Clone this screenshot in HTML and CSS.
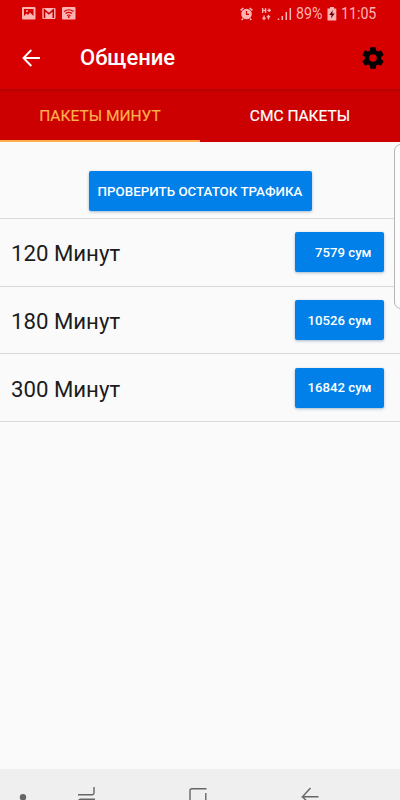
FILE: index.html
```html
<!DOCTYPE html>
<html lang="ru">
<head>
    <meta charset="UTF-8">
    <meta name="viewport" content="width=device-width, initial-scale=1.0">
    <title>Общение</title>
    <link rel="stylesheet" href="styles.css">
</head>
<body>
    <div class="screen">
        <header class="header">
            <div class="status-bar">
                <svg class="status-left" width="54" height="13" viewBox="0 0 54 13">
                    <rect width="13.5" height="12.5" rx="1" fill="#ffb3b3"/>
                    <path d="M2 2h9.500v7L8 5.500 6 8 4.500 6.500 2 9z" fill="#d60000"/>
                    <circle cx="5" cy="4" r="1" fill="#ffb3b3"/>
                    <rect x="20.300" y="1" width="13.200" height="11" rx="1" fill="#ffb3b3"/>
                    <path d="M22.500 11V3l4.400 3.800L31.300 3v8" fill="none" stroke="#c00000" stroke-width="1.600"/>
                    <rect x="40" width="13.500" height="12.500" rx="1" fill="#ffb3b3"/>
                    <path d="M42 4.500q4.800-3.500 9.600 0M43.500 6.600q3.300-2.400 6.600 0M45 8.600q1.800-1.200 3.600 0" fill="none" stroke="#d60000" stroke-width="1.200"/>
                    <circle cx="46.800" cy="10" r="1" fill="#d60000"/>
                </svg>
                <svg class="status-right" width="52" height="14" viewBox="0 0 52 14">
                    <circle cx="6.500" cy="7" r="5.300" fill="#ffb3b3"/>
                    <path d="M.6 3.400 3.400 1M12.400 3.400 9.600 1M3 11.500l-1.300 1.500M10 11.500l1.300 1.500" stroke="#ffb3b3" stroke-width="1.600"/>
                    <path d="M6.500 4v3.400H9" fill="none" stroke="#d60000" stroke-width="1.200"/>
                    <path d="M22.600 1v5M25.600 1v5M22.600 3.500h3M27.300 3.300H31M29.200 1.500v3.600M24 8.500v3.800M22.500 10.800 24 12.300l1.500-1.500M28.500 12.500V8.700M27 10.200l1.500-1.500 1.500 1.500" fill="none" stroke="#ffb3b3" stroke-width="1.300"/>
                    <path d="M38.500 11.500v1.500M42.300 9v4M46.300 5v8M50.300 1v12" stroke="#ffb3b3" stroke-width="1.500"/>
                </svg>
                <span class="percent">89%</span>
                <svg class="battery" width="10" height="14" viewBox="0 0 10 14">
                    <path d="M3 0h4v1.500h2.300v12H.5v-12H3z" fill="#ffb3b3"/>
                    <path d="M5.800 3 2.300 8h2.300L4 11.500 7.700 6.600H5.300z" fill="#5a0000"/>
                </svg>
                <span class="clock">11:05</span>
            </div>
            <div class="toolbar">
                <svg class="back" width="18" height="18" viewBox="0 0 18 18">
                    <path d="M9.300 1 1.500 9l7.800 8M1.500 9H18" fill="none" stroke="#fff" stroke-width="1.900"/>
                </svg>
                <h1>Общение</h1>
                <svg class="settings" width="26" height="26" viewBox="0 0 24 24">
                    <path d="M19.430 12.980c.04-.32.07-.64.07-.98s-.03-.66-.07-.98l2.110-1.650c.19-.15.24-.42.12-.64l-2-3.460c-.12-.22-.39-.3-.61-.22l-2.490 1c-.52-.4-1.080-.73-1.690-.98l-.38-2.650C14.460 2.180 14.250 2 14 2h-4c-.25 0-.46.18-.49.42l-.38 2.650c-.61.25-1.170.59-1.690.98l-2.490-1c-.23-.09-.49 0-.61.22l-2 3.460c-.13.22-.07.49.12.64l2.110 1.650c-.04.32-.07.65-.07.98s.03.66.07.98l-2.110 1.650c-.19.15-.24.42-.12.64l2 3.460c.12.22.39.3.61.22l2.490-1c.52.4 1.080.73 1.690.98l.38 2.650c.03.24.24.42.49.42h4c.25 0 .46-.18.49-.42l.38-2.650c.61-.25 1.170-.59 1.690-.98l2.490 1c.23.09.49 0 .61-.22l2-3.460c.12-.22.07-.49-.12-.64zM12 15.500a3.500 3.500 0 1 1 0-7 3.500 3.500 0 0 1 0 7z"/>
                </svg>
            </div>
        </header>

        <nav class="tabs">
            <a class="tab active">ПАКЕТЫ МИНУТ</a>
            <a class="tab">СМС ПАКЕТЫ</a>
        </nav>

        <main class="content">
            <div class="check">
                <button class="btn btn-check">ПРОВЕРИТЬ ОСТАТОК ТРАФИКА</button>
            </div>
            <div class="row">
                <span class="name">120 Минут</span>
                <button class="btn btn-price">7579 сум</button>
            </div>
            <div class="row">
                <span class="name">180 Минут</span>
                <button class="btn btn-price">10526 сум</button>
            </div>
            <div class="row">
                <span class="name">300 Минут</span>
                <button class="btn btn-price">16842 сум</button>
            </div>
        </main>

        <footer class="navbar">
            <svg width="400" height="31" viewBox="0 0 400 31" fill="none" stroke="#666" stroke-width="1.400">
                <circle cx="23" cy="28.300" r="3.200" fill="#666" stroke="none"/>
                <path d="M94 18v6q0 1.700-1.700 1.700H78M95 30.200H80.500q-1.700 0-1.700 1.700"/>
                <path d="M190 31V21.500q0-1.800 1.800-1.800H206.500M205.800 24v7"/>
                <path d="M310.500 19 302.500 27.800H318.500M302.500 27.800l5 5"/>
            </svg>
        </footer>

        <div class="edge-handle"></div>
    </div>
</body>
</html>
```

FILE: styles.css
```css
:root {
    --red: #d60000;
    --red-dark: #cc0000;
    --accent: #ffb04d;
    --blue: #0080e8;
    --status: #ffb3b3;
}

* {
    box-sizing: border-box;
}

body {
    margin: 0;
    font-family: Roboto, "Liberation Sans", sans-serif;
    background-color: #fafafa;
}

.screen {
    position: relative;
    display: flex;
    flex-direction: column;
    width: 400px;
    height: 800px;
    overflow: hidden;
}

.header {
    height: 89px;
    background-color: var(--red);
}

.status-bar {
    display: flex;
    align-items: center;
    height: 27px;
    padding-left: 22px;
    color: var(--status);
    font-size: 16.5px;
    line-height: 28px;
}

.status-right {
    margin-left: 164px;
}

.percent,
.clock {
    transform: scaleX(0.86);
    transform-origin: left center;
    white-space: nowrap;
}

.percent {
    width: 31px;
    margin-left: 4px;
}

.battery {
    margin-right: 4px;
}

.toolbar {
    display: flex;
    align-items: center;
    height: 62px;
    padding: 0 14px 0 22px;
}

h1 {
    margin: 0 0 0 40px;
    font-size: 22px;
    font-weight: 500;
    line-height: 28px;
    color: #fff;
}

.settings {
    margin-left: auto;
}

.tabs {
    display: flex;
    height: 53px;
    background: linear-gradient(#b00000, var(--red-dark) 4px);
}

.tab {
    flex: 1;
    border-bottom: 2px solid transparent;
    text-align: center;
    font-size: 15.5px;
    line-height: 55px;
    color: #fff;
    -webkit-text-stroke: 0.2px;
}

.tab.active {
    color: var(--accent);
    border-bottom-color: var(--accent);
}

.content {
    flex: 1;
}

.check {
    display: flex;
    justify-content: center;
    height: 77px;
    padding-top: 29px;
    border-bottom: 1px solid #d8d8d8;
}

.row {
    display: flex;
    align-items: center;
    justify-content: space-between;
    height: 67.7px;
    padding: 0 16px 0 11px;
    border-bottom: 1px solid #d8d8d8;
}

.name {
    padding-top: 2px;
    font-size: 22.2px;
    color: #1c1c1c;
}

.btn {
    height: 40px;
    border: none;
    border-radius: 2px;
    background-color: var(--blue);
    box-shadow: 0 1px 3px rgba(0, 60, 120, 0.35);
    color: #fff;
    font-family: inherit;
    font-weight: 500;
    white-space: nowrap;
}

.btn-check {
    width: 223px;
    padding: 1px 0 0;
    font-size: 13.35px;
}

.btn-price {
    width: 89px;
    padding: 0 12.5px 0 0;
    font-size: 13.2px;
    text-align: right;
}

.navbar {
    height: 31px;
    background-color: #efefef;
}

/* edge panel handle, sticks out past the right side */
.edge-handle {
    position: absolute;
    top: 144px;
    right: -10px;
    width: 16px;
    height: 165px;
    border: 1px solid #b5b5b5;
    border-radius: 7px;
    background-color: #fcfcfc;
}
```
